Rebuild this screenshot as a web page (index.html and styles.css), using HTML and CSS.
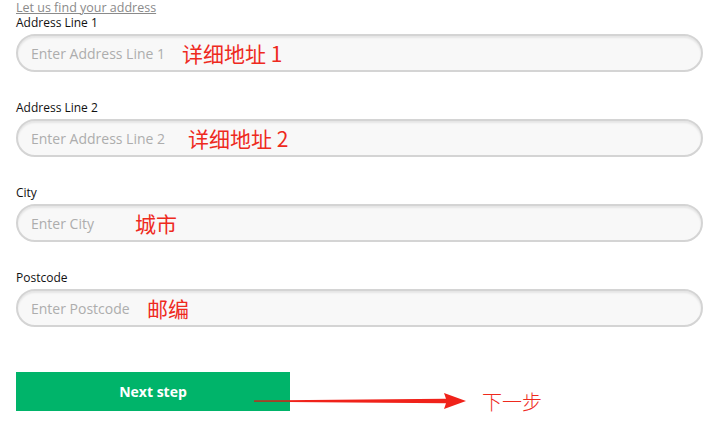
FILE: index.html
```html
<!DOCTYPE html>
<html lang="en">
<head>
<meta charset="utf-8">
<title>Address</title>
<link rel="stylesheet" href="styles.css">
</head>
<body>
<form class="form">
  <a class="find-link" href="#">Let us find your address</a>
  <div class="group">
    <label class="label">Address Line 1</label>
    <div class="field">
      <input class="input" placeholder="Enter Address Line 1">
      <span class="note note-1">详细地址 1</span>
    </div>
  </div>
  <div class="group">
    <label class="label">Address Line 2</label>
    <div class="field">
      <input class="input" placeholder="Enter Address Line 2">
      <span class="note note-2">详细地址 2</span>
    </div>
  </div>
  <div class="group">
    <label class="label">City</label>
    <div class="field">
      <input class="input" placeholder="Enter City">
      <span class="note note-3">城市</span>
    </div>
  </div>
  <div class="group">
    <label class="label">Postcode</label>
    <div class="field">
      <input class="input" placeholder="Enter Postcode">
      <span class="note note-4">邮编</span>
    </div>
  </div>
  <div class="actions">
    <button type="button" class="btn">Next step</button>
    <svg class="arrow" width="220" height="24" viewBox="0 0 220 24">
      <path d="M0 11.5 L192 9.8 L190 4 L212 12 L190 20 L192 14.2 L0 12.8 Z" fill="#f0221a"/>
      <path d="M0 12.1 L36 12.1" stroke="#8a4a2a" stroke-width="1.4"/>
    </svg>
    <span class="note note-5">下一步</span>
  </div>
</form>
</body>
</html>
```
FILE: styles.css
```css
html, body {
  margin: 0;
  padding: 0;
  background: #fff;
}
body {
  font-family: "Open Sans", "Liberation Sans", sans-serif;
  color: #222;
}
.form {
  width: 687px;
  padding: 0 0 0 16px;
  display: flex;
  flex-direction: column;
}
.find-link {
  display: block;
  font-size: 12.5px;
  line-height: 13px;
  padding-top: 1px;
  color: #8a8a8a;
  text-decoration: underline;
  align-self: flex-start;
}
.group {
  display: flex;
  flex-direction: column;
  margin-bottom: 29px;
}
.group:first-of-type {
  margin-top: 2px;
}
.label {
  font-size: 12px;
  line-height: 14px;
  color: #111;
  margin-bottom: 4px;
}
.field {
  position: relative;
}
.input {
  box-sizing: border-box;
  width: 687px;
  height: 38px;
  border: 2px solid #d4d4d4;
  border-radius: 19px;
  background: #f8f8f8;
  box-shadow: inset 0 2px 2px rgba(0,0,0,0.08);
  padding: 0 13px;
  font-family: "Open Sans", "Liberation Sans", sans-serif;
  font-size: 14px;
  color: #333;
  outline: none;
}
.input::placeholder {
  color: #adadad;
}
.note {
  position: absolute;
  font-family: "Noto Sans CJK SC", "Noto Sans", sans-serif;
  font-size: 21px;
  line-height: 24px;
  color: #ee2a1e;
  white-space: nowrap;
}
.field .note {
  top: 7px;
}
.note-1 { left: 166px; }
.note-2 { left: 172px; }
.note-3 { left: 119px; }
.note-4 { left: 131px; }
.actions {
  position: relative;
  margin-top: 16px;
  height: 40px;
}
.btn {
  display: block;
  width: 274px;
  height: 39px;
  border: none;
  background: #00b46a;
  color: #fff;
  font-family: "Open Sans", "Liberation Sans", sans-serif;
  font-weight: 700;
  font-size: 14px;
  cursor: pointer;
}
.arrow {
  position: absolute;
  left: 238px;
  top: 17px;
}
.note-5 {
  left: 466px;
  top: 18px;
  font-size: 20px;
  font-weight: 300;
}
```
